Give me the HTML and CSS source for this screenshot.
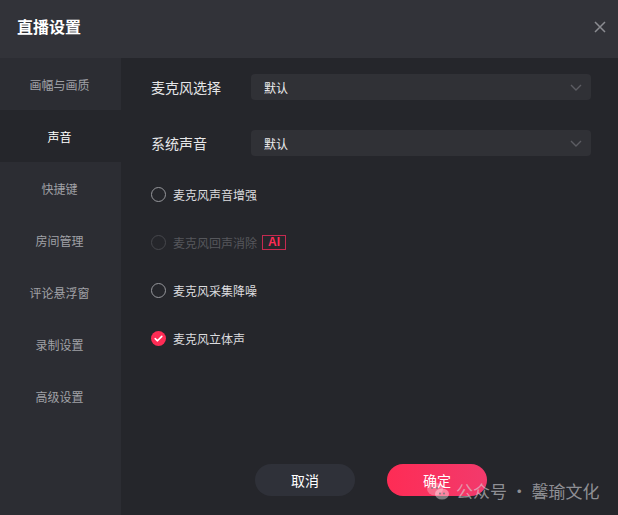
FILE: index.html
```html
<!DOCTYPE html>
<html lang="zh">
<head>
<meta charset="utf-8">
<link rel="stylesheet" href="styles.css">
</head>
<body>
<div class="dialog">
  <header class="header">
    <h1 class="title">直播设置</h1>
    <svg class="close" width="12" height="12" viewBox="0 0 12 12"><path d="M1 1L11 11M11 1L1 11" stroke="#8b8c91" stroke-width="1.5" fill="none"/></svg>
  </header>
  <div class="body">
    <nav class="sidebar">
      <div class="nav-item">画幅与画质</div>
      <div class="nav-item active">声音</div>
      <div class="nav-item">快捷键</div>
      <div class="nav-item">房间管理</div>
      <div class="nav-item">评论悬浮窗</div>
      <div class="nav-item">录制设置</div>
      <div class="nav-item">高级设置</div>
    </nav>
    <main class="main">
      <div class="field first">
        <div class="label">麦克风选择</div>
        <div class="select"><span>默认</span>
          <svg class="chev" width="12" height="7" viewBox="0 0 12 7"><path d="M1 1L6 6L11 1" stroke="#5c5d63" stroke-width="1.4" fill="none"/></svg>
        </div>
      </div>
      <div class="field second">
        <div class="label">系统声音</div>
        <div class="select"><span>默认</span>
          <svg class="chev" width="12" height="7" viewBox="0 0 12 7"><path d="M1 1L6 6L11 1" stroke="#5c5d63" stroke-width="1.4" fill="none"/></svg>
        </div>
      </div>
      <div class="opt"><span class="radio"></span><span class="opt-text">麦克风声音增强</span></div>
      <div class="opt disabled"><span class="radio"></span><span class="opt-text">麦克风回声消除</span><span class="ai">AI</span></div>
      <div class="opt"><span class="radio"></span><span class="opt-text">麦克风采集降噪</span></div>
      <div class="opt"><span class="radio checked"><svg width="15" height="15" viewBox="0 0 15 15"><path d="M4.2 7.6L6.5 9.8L10.8 5.4" stroke="#fff" stroke-width="1.6" fill="none" stroke-linecap="round" stroke-linejoin="round"/></svg></span><span class="opt-text">麦克风立体声</span></div>
      <div class="footer">
        <button class="btn cancel">取消</button>
        <button class="btn ok">确定</button>
      </div>
    </main>
  </div>
  <div class="watermark">
    <svg width="24" height="20" viewBox="0 0 24 20"><ellipse cx="9" cy="8" rx="8" ry="6.5" fill="rgba(255,255,255,0.28)"/><ellipse cx="16" cy="13" rx="7" ry="5.6" fill="rgba(255,255,255,0.4)"/><circle cx="6" cy="7" r="1" fill="#8a7a80"/><circle cx="11" cy="7" r="1" fill="#8a7a80"/><circle cx="14" cy="12.5" r="0.9" fill="#7a7a80"/><circle cx="18" cy="12.5" r="0.9" fill="#7a7a80"/></svg>
    <span>公众号 · 馨瑜文化</span>
  </div>
</div>
</body>
</html>
```

FILE: styles.css
```css
* { box-sizing: border-box; }
html, body { margin: 0; padding: 0; }
body {
  width: 618px;
  height: 515px;
  background: #25262b;
  font-family: "Noto Sans CJK SC", "Microsoft YaHei", sans-serif;
  overflow: hidden;
}
.dialog {
  position: relative;
  width: 618px;
  height: 515px;
  display: flex;
  flex-direction: column;
}
.header {
  height: 58px;
  background: #323339;
  display: flex;
  align-items: center;
  justify-content: space-between;
  padding: 0 12px 0 17px;
  flex-shrink: 0;
}
.title {
  margin: 0;
  font-size: 16px;
  font-weight: 700;
  color: #ffffff;
  line-height: 20px;
  margin-top: -6px;
}
.close { margin-top: -4px; }
.body {
  flex: 1;
  display: flex;
}
.sidebar {
  width: 121px;
  background: #2c2d33;
  display: flex;
  flex-direction: column;
}
.nav-item {
  height: 52px;
  display: flex;
  align-items: center;
  justify-content: center;
  font-size: 12px;
  color: #a0a1a6;
  padding-right: 2px;
}
.nav-item.active {
  background: #25262b;
  color: #ffffff;
}
.main {
  flex: 1;
  display: flex;
  flex-direction: column;
  padding: 16px 27px 19px 30px;
}
.field {
  display: flex;
  align-items: center;
  height: 26px;
}
.field.first { margin-bottom: 30px; }
.field.second { margin-bottom: 14px; }
.label {
  width: 100px;
  font-size: 14px;
  color: #e6e6e8;
}
.select {
  flex: 1;
  height: 26px;
  background: #303136;
  border-radius: 4px;
  display: flex;
  align-items: center;
  justify-content: space-between;
  padding: 0 9px 0 13px;
  font-size: 12px;
  color: #ececee;
}
.chev { margin-top: 1px; }
.opt {
  height: 48px;
  display: flex;
  align-items: center;
  font-size: 12px;
  color: #dcdcdf;
}
.radio {
  width: 15px;
  height: 15px;
  border-radius: 50%;
  border: 1.5px solid #96979c;
  margin-right: 7px;
  flex-shrink: 0;
  display: flex;
}
.radio.checked {
  border: none;
  background: #fe2c55;
}
.opt.disabled { color: #56575c; }
.opt.disabled .radio { border-color: #46474c; }
.ai {
  margin-left: 5px;
  border: 1px solid #c42a50;
  color: #fe2c55;
  font-family: "Liberation Sans", Arial, sans-serif;
  font-weight: 700;
  font-size: 12px;
  line-height: 13px;
  width: 24px;
  height: 15px;
  text-align: center;
}
.footer {
  margin-top: auto;
  display: flex;
  justify-content: center;
  gap: 32px;
}
.btn {
  width: 100px;
  height: 32px;
  border-radius: 16px;
  border: none;
  font-family: inherit;
  font-size: 14px;
  color: #ffffff;
}
.cancel { background: #2f3139; }
.ok { background: linear-gradient(90deg, #fe2c55, #f23a6c); }
.watermark {
  position: absolute;
  left: 426px;
  top: 478px;
  display: flex;
  align-items: center;
  gap: 6px;
  font-size: 17px;
  color: rgba(215, 215, 220, 0.6);
}
```
